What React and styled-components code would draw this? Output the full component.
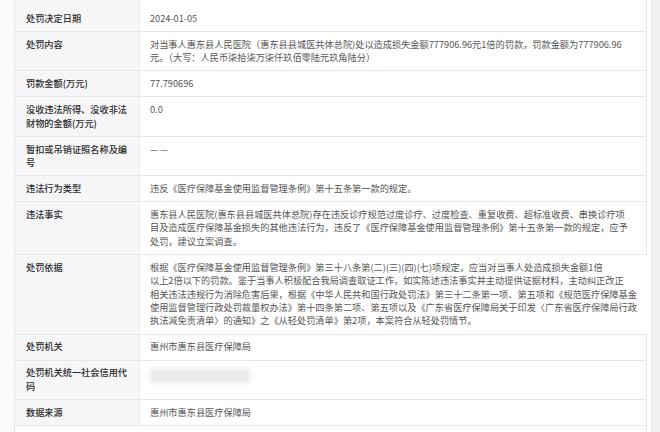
import React from 'react'
import styled, { createGlobalStyle } from 'styled-components'

const Global = createGlobalStyle`
  html, body {
    margin: 0;
    padding: 0;
    background: #ffffff;
  }
  body {
    font-family: "Noto Sans CJK SC", "Noto Sans", sans-serif;
    -webkit-font-smoothing: antialiased;
  }
`

const Page = styled.div`
  display: flex;
  width: 660px;
  height: 432px;
  overflow: hidden;
  background: #fff;
`

const Gutter = styled.div`
  width: 14px;
  flex-shrink: 0;
  background: #fafafa;
`

const Table = styled.div`
  width: 633px;
  flex-shrink: 0;
  border-left: 1px solid #e6e6e6;
  border-right: 1px solid #e6e6e6;
  box-sizing: border-box;
  display: flex;
  flex-direction: column;
`

const Track = styled.div`
  flex: 1;
  display: flex;
  justify-content: flex-end;
  background: #fff;
  &::after {
    content: '';
    width: 8px;
    background: #f1f1f1;
    border-left: 1px solid #e9e9e9;
  }
`

const Row = styled.div`
  display: grid;
  grid-template-columns: 125px 1fr;
  border-bottom: 1px solid #e8e8e8;
  ${p => p.$cut && `height: ${p.$cut}px;`}
`

const Label = styled.div`
  background: #f6f6f8;
  border-right: 1px solid #e8e8e8;
  padding: 5.8px 6px 5.8px 11px;
  font-size: 9.2px;
  line-height: 13.4px;
  font-weight: 500;
  color: #2a2a2a;
  white-space: nowrap;
`

const Value = styled.div`
  padding: 5.8px 10px;
  font-size: 9.2px;
  line-height: 13.4px;
  color: #555;
  white-space: nowrap;
  background: #fff;
`

const Line = styled.div``

const Redacted = styled.div`
  width: 100px;
  height: 14px;
  margin-top: 3px;
  background: #e9e9ea;
  filter: blur(2px);
  border-radius: 2px;
`

const rows = [
  { label: '处罚决定日期', lines: ['2024-01-05'] },
  {
    label: '处罚内容',
    lines: [
      '对当事人惠东县人民医院（惠东县县城医共体总院)处以造成损失金额777906.96元1倍的罚款，罚款金额为777906.96',
      '元。（大写：人民币柒拾柒万柒仟玖佰零陆元玖角陆分）',
    ],
  },
  { label: '罚款金额(万元)', lines: ['77.790696'] },
  { label: ['没收违法所得、没收非法', '财物的金额(万元)'], lines: ['0.0'] },
  { label: ['暂扣或吊销证照名称及编', '号'], lines: ['— —'] },
  { label: '违法行为类型', lines: ['违反《医疗保障基金使用监督管理条例》第十五条第一款的规定。'] },
  {
    label: '违法事实',
    lines: [
      '惠东县人民医院(惠东县县城医共体总院)存在违反诊疗规范过度诊疗、过度检查、重复收费、超标准收费、串换诊疗项',
      '目及造成医疗保障基金损失的其他违法行为，违反了《医疗保障基金使用监督管理条例》第十五条第一款的规定，应予',
      '处罚，建议立案调查。',
    ],
  },
  {
    label: '处罚依据',
    lines: [
      '根据《医疗保障基金使用监督管理条例》第三十八条第(二)(三)(四)(七)项规定，应当对当事人处造成损失金额1倍',
      '以上2倍以下的罚款。鉴于当事人积极配合我局调查取证工作，如实陈述违法事实并主动提供证据材料，主动纠正改正',
      '相关违法违规行为消除危害后果，根据《中华人民共和国行政处罚法》第三十二条第一项、第五项和《规范医疗保障基金',
      '使用监督管理行政处罚裁量权办法》第十四条第二项、第五项以及《广东省医疗保障局关于印发〈广东省医疗保障局行政',
      '执法减免责清单〉的通知》之《从轻处罚清单》第2项，本案符合从轻处罚情节。',
    ],
  },
  { label: '处罚机关', lines: ['惠州市惠东县医疗保障局'] },
  { label: ['处罚机关统一社会信用代', '码'], redacted: true },
  { label: '数据来源', lines: ['惠州市惠东县医疗保障局'] },
]

export default function App() {
  return (
    <>
      <Global />
      <Page>
        <Gutter />
        <Table>
          <Row $cut={5}>
            <Label />
            <Value />
          </Row>
          {rows.map((r, i) => (
            <Row key={i}>
              <Label>
                {[].concat(r.label).map((t, j) => (
                  <Line key={j}>{t}</Line>
                ))}
              </Label>
              <Value>
                {r.redacted ? (
                  <Redacted />
                ) : (
                  r.lines.map((t, j) => <Line key={j}>{t}</Line>)
                )}
              </Value>
            </Row>
          ))}
        </Table>
        <Track />
      </Page>
    </>
  )
}
